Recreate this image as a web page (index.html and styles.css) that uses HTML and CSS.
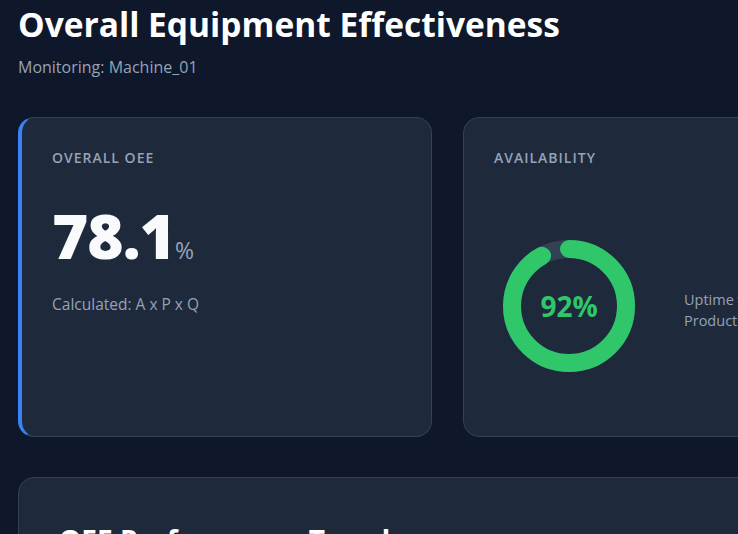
FILE: index.html
```html
<!DOCTYPE html>
<html lang="en">
  <head>
    <meta charset="UTF-8" />
    <meta name="viewport" content="width=device-width, initial-scale=1.0" />
    <title>OEE Dashboard</title>
    <link rel="stylesheet" href="styles.css">
  </head>
  <body>
    <div class="dashboard">
      <div class="header">
        <h1>Overall Equipment Effectiveness</h1>
        <p>Monitoring: Machine_01</p>
      </div>

      <div class="metrics">
        <div class="card card-main">
          <div class="card-label">Overall OEE</div>
          <div class="big-value">78.1<span class="unit">%</span></div>
          <div class="card-note">Calculated: A x P x Q</div>
        </div>

        <div class="card">
          <div class="card-label">Availability</div>
          <div class="gauge-row">
            <div class="gauge">
              <svg width="150" height="150" viewBox="0 0 150 150">
                <circle class="gauge-track" cx="75" cy="75" r="57" />
                <circle
                  class="gauge-fill"
                  cx="75"
                  cy="75"
                  r="57"
                  stroke-dasharray="329.5 358.1"
                  transform="rotate(-90 75 75)"
                />
              </svg>
              <span class="gauge-value">92%</span>
            </div>
            <div class="gauge-text">
              Uptime vs Planned<br />
              Production Time
            </div>
          </div>
        </div>
      </div>

      <div class="card card-trend">
        <h2>OEE Performance Trend</h2>
      </div>
    </div>
  </body>
</html>
```

FILE: styles.css
```css
html,
body {
  overflow: hidden;
}

body {
  font-family: "Open Sans", "Noto Sans", sans-serif;
  margin: 0;
  padding: 0 18px;
  background-color: #0f172a;
  color: #f8fafc;
}

.dashboard {
  width: 1000px;
}

.header h1 {
  margin: 0;
  padding-top: 2px;
  font-size: 33.5px;
  font-weight: 700;
  line-height: 44px;
  color: #ffffff;
}

.header p {
  margin: 10px 0 0;
  font-size: 16px;
  color: #94a3b8;
}

.metrics {
  display: grid;
  grid-template-columns: 414px 414px;
  gap: 31px;
  margin-top: 39px;
}

.card {
  background-color: #1e293b;
  border: 1px solid #334155;
  border-radius: 16px;
  padding: 30px;
  box-sizing: border-box;
}

.card-main {
  border-left: 4px solid #3b82f6;
}

.card-label {
  font-size: 14px;
  font-weight: 600;
  line-height: 20px;
  letter-spacing: 1px;
  text-transform: uppercase;
  color: #94a3b8;
}

.big-value {
  margin-top: 31px;
  font-size: 62px;
  font-weight: 800;
  line-height: 72px;
  letter-spacing: -1px;
  color: #f8fafc;
}

.big-value .unit {
  font-size: 23px;
  font-weight: 400;
  letter-spacing: 0;
  color: #94a3b8;
}

.card-note {
  margin-top: 7px;
  font-size: 15.5px;
  color: #94a3b8;
}

.gauge-row {
  display: flex;
  align-items: center;
  gap: 40px;
  margin-top: 63px;
  margin-bottom: 25px;
}

.gauge {
  position: relative;
  width: 150px;
  height: 150px;
  flex-shrink: 0;
}

.gauge svg {
  display: block;
}

.gauge-track {
  fill: none;
  stroke: #334155;
  stroke-width: 18;
}

.gauge-fill {
  fill: none;
  stroke: #2fc76a;
  stroke-width: 18;
  stroke-linecap: round;
}

.gauge-value {
  position: absolute;
  inset: 0;
  display: flex;
  align-items: center;
  justify-content: center;
  font-size: 28px;
  font-weight: 700;
  color: #2fc76a;
}

.gauge-text {
  margin-top: 8px;
  font-size: 14.5px;
  line-height: 21px;
  color: #94a3b8;
  white-space: nowrap;
}

.card-trend {
  margin-top: 40px;
  padding: 43px 40px 40px;
  height: 300px;
}

.card-trend h2 {
  margin: 0;
  font-size: 28px;
  font-weight: 700;
  line-height: 38px;
  color: #ffffff;
}
```
